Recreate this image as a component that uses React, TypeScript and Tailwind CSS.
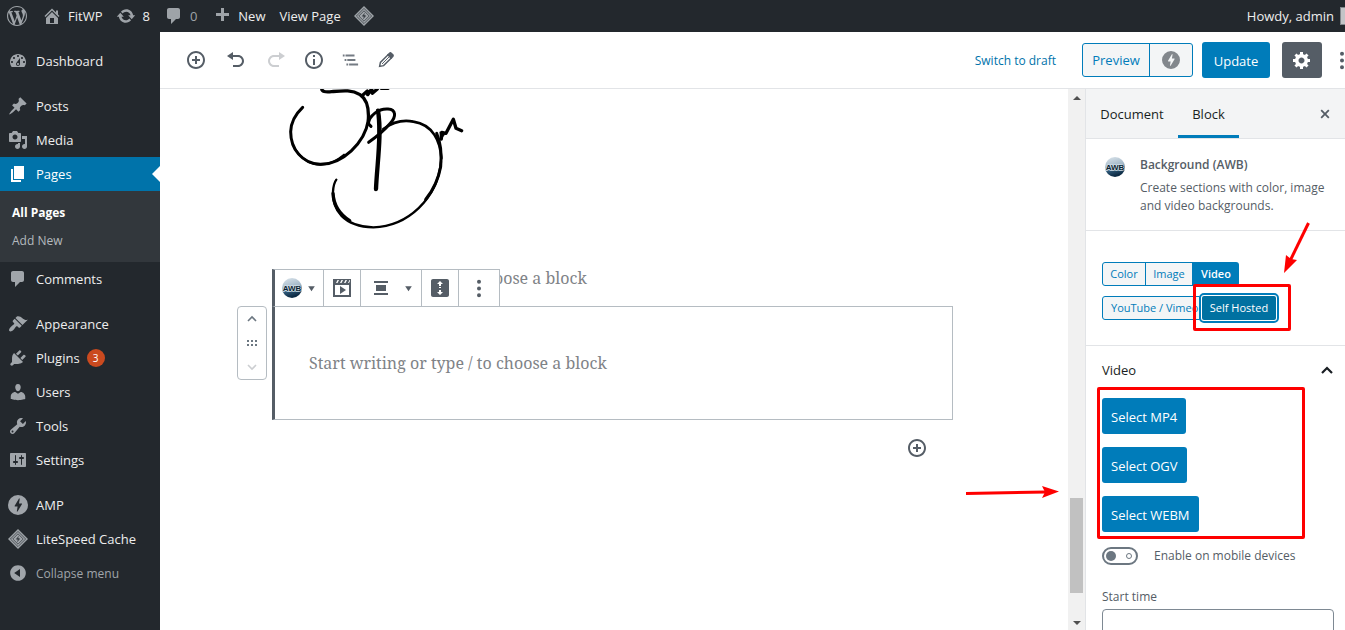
import type { ReactNode } from 'react';

const icons = {
  home: 'M16 8.5l1.53 1.53-1.06 1.06L10 4.6l-6.47 6.49-1.06-1.06L10 2.5l4 4v-2h2v4zm-6-2.46l6 5.99V18H4v-5.97zM12 17v-5H8v5h4z',
  update: 'M10.2 3.28c3.53 0 6.43 2.61 6.92 6h2.08l-3.5 4-3.5-4h2.32c-.45-1.97-2.21-3.45-4.32-3.45-1.45 0-2.73.71-3.54 1.78L4.95 5.66C6.23 4.2 8.11 3.28 10.2 3.28zm-.4 13.44c-3.52 0-6.43-2.61-6.92-6H.8l3.5-4c1.17 1.33 2.33 2.67 3.5 4H5.48c.45 1.97 2.21 3.45 4.32 3.45 1.45 0 2.73-.71 3.54-1.78l1.71 1.95c-1.28 1.46-3.15 2.38-5.25 2.38z',
  comments: 'M5 2h9c1.1 0 2 .9 2 2v7c0 1.1-.9 2-2 2h-2l-5 5v-5H5c-1.1 0-2-.9-2-2V4c0-1.1.9-2 2-2z',
  plus: 'M17 7v3h-5v5H9v-5H4V7h5V2h3v5h5z',
  dashboard: 'M3.76 16h12.48c1.1-1.37 1.76-3.11 1.76-5 0-4.42-3.58-8-8-8s-8 3.58-8 8c0 1.89.66 3.63 1.76 5zM10 4c.55 0 1 .45 1 1s-.45 1-1 1-1-.45-1-1 .45-1 1-1zM6 6c.55 0 1 .45 1 1s-.45 1-1 1-1-.45-1-1 .45-1 1-1zm8 0c.55 0 1 .45 1 1s-.45 1-1 1-1-.45-1-1 .45-1 1-1zm-5.37 5.55L12 7v6c0 1.1-.9 2-2 2s-2-.9-2-2c0-.57.24-1.08.63-1.45zM4 10c.55 0 1 .45 1 1s-.45 1-1 1-1-.45-1-1 .45-1 1-1zm12 0c.55 0 1 .45 1 1s-.45 1-1 1-1-.45-1-1 .45-1 1-1zm-5 3c0-.55-.45-1-1-1s-1 .45-1 1 .45 1 1 1 1-.45 1-1z',
  posts: 'M10.44 3.02l1.82-1.82 6.36 6.35-1.83 1.82c-1.05-.68-2.48-.57-3.41.36l-.75.75c-.92.93-1.04 2.35-.35 3.41l-1.83 1.82-2.41-2.41-2.8 2.79c-.42.42-3.38 2.71-3.8 2.29s1.86-3.39 2.28-3.81l2.79-2.79L4.1 9.36l1.83-1.82c1.05.69 2.48.57 3.4-.36l.75-.75c.93-.92 1.05-2.35.36-3.41z',
  media: 'M13 11V4c0-.55-.45-1-1-1h-1.67L9 1H5L3.67 3H2c-.55 0-1 .45-1 1v7c0 .55.45 1 1 1h10c.55 0 1-.45 1-1zM7 4.5c1.38 0 2.5 1.12 2.5 2.5S8.38 9.5 7 9.5 4.5 8.38 4.5 7 5.62 4.5 7 4.5zM14 6h5v10.5c0 1.38-1.12 2.5-2.5 2.5S14 17.88 14 16.5s1.12-2.5 2.5-2.5c.17 0 .34.02.5.05V9h-3V6zm-4 8.05V13h2v3.5c0 1.38-1.12 2.5-2.5 2.5S7 17.88 7 16.5 8.12 14 9.5 14c.17 0 .34.02.5.05z',
  pages: 'M6 15V2h10v13H6zm-1 1h8v2H3V5h2v11z',
  appearance: 'M14.48 11.06L7.41 3.99l1.5-1.5c.5-.56 2.3-.47 3.51.32 1.21.8 1.43 1.28 2.91 2.1 1.18.64 2.45 1.26 4.45.85zm-.71.71L6.7 4.7 4.93 6.47c-.39.39-.39 1.02 0 1.41l1.06 1.06c.39.39.39 1.03 0 1.42-.6.6-1.43 1.11-2.21 1.69-.35.26-.7.53-1.01.84C1.43 14.23.4 16.08 1.4 17.07c.99 1 2.84-.03 4.18-1.36.31-.31.58-.66.85-1.02.57-.78 1.08-1.61 1.69-2.21.39-.39 1.02-.39 1.41 0l1.06 1.06c.39.39 1.02.39 1.41 0z',
  plugins: 'M13.11 4.36L9.87 7.6 8 5.73l3.24-3.24c.35-.34 1.05-.2 1.56.32.52.51.66 1.21.31 1.55zm-8 1.77l.91-1.12 9.01 9.01-1.19.84c-.71.71-2.63 1.16-3.82 1.16H6.14L4.9 17.26c-.59.59-1.54.59-2.12 0-.59-.58-.59-1.53 0-2.12l1.24-1.24v-3.88c0-1.13.4-3.19 1.09-3.89zm7.26 3.97l3.24-3.24c.34-.35 1.04-.21 1.55.31.52.51.66 1.21.31 1.55l-3.24 3.25z',
  users: 'M10 9.25c-2.27 0-2.73-3.44-2.73-3.44C7 4.02 7.82 2 9.97 2c2.16 0 2.98 2.02 2.71 3.81 0 0-.41 3.44-2.68 3.44zm0 2.57L12.72 10c2.39 0 4.52 2.33 4.52 4.53v2.49s-3.65 1.13-7.24 1.13c-3.65 0-7.24-1.13-7.24-1.13v-2.49c0-2.25 1.94-4.48 4.47-4.48z',
  tools: 'M16.68 9.77c-1.34 1.34-3.3 1.67-4.95.99l-5.41 6.52c-.99.99-2.59.99-3.58 0s-.99-2.59 0-3.57l6.52-5.42c-.68-1.65-.35-3.61.99-4.95 1.28-1.28 3.12-1.62 4.72-1.06l-2.89 2.89 2.82 2.82 2.86-2.87c.53 1.58.18 3.39-1.08 4.65zM3.81 16.21c.4.39 1.04.39 1.43 0 .4-.4.4-1.04 0-1.43-.39-.4-1.03-.4-1.43 0-.39.39-.39 1.03 0 1.43z',
  settings: 'M18 16V4c0-.55-.45-1-1-1H3c-.55 0-1 .45-1 1v12c0 .55.45 1 1 1h14c.55 0 1-.45 1-1zM8 11h1c.55 0 1 .45 1 1s-.45 1-1 1H8v1.5c0 .28-.22.5-.5.5s-.5-.22-.5-.5V13H6c-.55 0-1-.45-1-1s.45-1 1-1h1V5.5c0-.28.22-.5.5-.5s.5.22.5.5V11zm5-2h-1c-.55 0-1-.45-1-1s.45-1 1-1h1V5.5c0-.28.22-.5.5-.5s.5.22.5.5V7h1c.55 0 1 .45 1 1s-.45 1-1 1h-1v5.5c0 .28-.22.5-.5.5s-.5-.22-.5-.5V9z',
  collapse: 'M10 2.16c4.33 0 7.84 3.51 7.84 7.84s-3.51 7.84-7.84 7.84S2.16 14.33 2.16 10 5.67 2.16 10 2.16zm2 11.72V6.12L6.18 9.97z',
  gear: 'M18 12h-2.18c-.17.7-.44 1.35-.81 1.93l1.54 1.54-2.1 2.1-1.54-1.54c-.58.36-1.23.63-1.91.79V19H8v-2.18c-.68-.16-1.33-.43-1.91-.79l-1.54 1.54-2.12-2.12 1.54-1.54c-.36-.58-.63-1.23-.79-1.91H1V9.03h2.17c.16-.7.44-1.35.8-1.94L2.43 5.55l2.1-2.1 1.54 1.54c.58-.37 1.24-.64 1.93-.81V2h3v2.18c.68.16 1.33.43 1.91.79l1.54-1.54 2.12 2.12-1.54 1.54c.36.59.64 1.24.8 1.94H18V12zm-8.5 1.5c1.66 0 3-1.34 3-3s-1.34-3-3-3-3 1.34-3 3 1.34 3 3 3z',
  insert: 'M10 1c-5 0-9 4-9 9s4 9 9 9 9-4 9-9-4-9-9-9zm0 16c-3.9 0-7-3.1-7-7s3.1-7 7-7 7 3.1 7 7-3.1 7-7 7zm1-11H9v3H6v2h3v3h2v-3h3V9h-3V6z',
  undo: 'M12 5H7V2L1 6l6 4V7h5c2.2 0 4 1.8 4 4s-1.8 4-4 4H7v2h5c3.3 0 6-2.7 6-6s-2.7-6-6-6z',
  redo: 'M8 5h5V2l6 4-6 4V7H8c-2.2 0-4 1.8-4 4s1.8 4 4 4h5v2H8c-3.3 0-6-2.7-6-6s2.7-6 6-6z',
  info: 'M9 15h2V9H9v6zm1-14c-5 0-9 4-9 9s4 9 9 9 9-4 9-9-4-9-9-9zm0 16c-3.9 0-7-3.1-7-7s3.1-7 7-7 7 3.1 7 7-3.1 7-7 7zM9 7h2V5H9v2z',
  outline: 'M2 4h2v2H2zM5 4h10v2H5zM4 9h2v2H4zM7 9h9v2H7zM6 14h2v2H6zM9 14h10v2H9z',
  center: 'M3 5h14V3H3v2zm12 8V7H5v6h10zM3 17h14v-2H3v2z',
  close: 'M14.95 6.46L11.41 10l3.54 3.54-1.41 1.41L10 11.42l-3.53 3.53-1.42-1.42L8.58 10 5.05 6.47l1.42-1.42L10 8.58l3.54-3.53z',
  dots: 'M12 3.8a2 2 0 1 1-4 0 2 2 0 0 1 4 0zM12 10.5a2 2 0 1 1-4 0 2 2 0 0 1 4 0zM12 17.2a2 2 0 1 1-4 0 2 2 0 0 1 4 0z',
  caret: 'M4 6h12l-6 9z',
  amp: 'M10 0a10 10 0 1 0 0 20 10 10 0 0 0 0-20zm3.9 9.2l-4.3 7.2H8.8l.8-4.8H7.2c-.5 0-.7-.4-.5-.9L11 3.6h.8L11 8.4h2.4c.5 0 .8.3.5.8z',
  clip: 'M1 1h18v18H1zM3 7v10h14V7zM4 5h1.500l1.500-3H5.500zM8 5h1.500L11 2H9.500zM12 5h1.500L15 2h-1.500zM16 5h1l1-2v-1h-.5zM8 8v8l6-4z',
  height: 'M3 1h14c1.1 0 2 .9 2 2v14c0 1.1-.9 2-2 2H3c-1.1 0-2-.9-2-2V3c0-1.1.9-2 2-2zm7 2L7 6h2v2h2V6h2zM9 12v2H7l3 3 3-3h-2v-2zM9 9h2v1H9z',
};

type IconName = keyof typeof icons;

function Icon({ name, className = 'size-5' }: { name: IconName; className?: string }) {
  return (
    <svg viewBox="0 0 20 20" fill="currentColor" fillRule="evenodd" className={`shrink-0 ${className}`} aria-hidden="true">
      <path d={icons[name]} />
    </svg>
  );
}

function LiteSpeed() {
  return (
    <svg viewBox="0 0 20 20" className="size-5 shrink-0" aria-hidden="true">
      <path d="M10 0l10 10-10 10L0 10z" fill="#9ea3a8" />
      <path d="M10 2.400l7.600 7.600-7.600 7.600L2.400 10zM10 4.800l5.200 5.200-5.200 5.200L4.800 10z" fill="none" stroke="#3c4248" strokeWidth=".8" />
      <path d="M11 6.400L7.800 10.200l2 .6-.9 2.800 3.300-3.800-2-.7z" fill="#3c4248" />
    </svg>
  );
}

function WordPress() {
  return (
    <svg viewBox="0 0 20 20" className="size-5" fill="#9ea3a8" aria-hidden="true">
      <path d="M20 10c0-5.51-4.49-10-10-10C4.48 0 0 4.49 0 10c0 5.52 4.48 10 10 10 5.51 0 10-4.48 10-10zM7.78 15.37L4.37 6.22c.55-.02 1.17-.08 1.17-.08.5-.06.44-1.13-.06-1.11 0 0-1.45.11-2.37.11-.18 0-.37 0-.58-.01C4.12 2.69 6.87 1.11 10 1.11c2.33 0 4.45.87 6.05 2.34-.68-.11-1.65.39-1.65 1.58 0 .74.45 1.36.9 2.1.35.61.55 1.36.55 2.46 0 1.49-1.4 5-1.4 5l-3.03-8.37c.54-.02.82-.17.82-.17.5-.05.44-1.25-.06-1.22 0 0-1.44.12-2.38.12-.87 0-2.33-.12-2.33-.12-.5-.03-.56 1.2-.06 1.22l.92.08 1.26 3.41zM17.41 10c.24-.64.74-1.87.43-4.25.7 1.29 1.05 2.71 1.05 4.25 0 3.29-1.73 6.24-4.4 7.78.97-2.59 1.94-5.2 2.92-7.78zM6.1 18.09C3.12 16.65 1.11 13.53 1.11 10c0-1.3.23-2.48.72-3.59C3.25 10.3 4.67 14.2 6.1 18.09zm4.03-6.63l2.58 6.98c-.86.29-1.76.45-2.71.45-.79 0-1.57-.11-2.29-.33.81-2.38 1.62-4.74 2.42-7.1z" />
    </svg>
  );
}

function AwbLogo() {
  return (
    <svg viewBox="0 0 20 20" className="size-5 shrink-0" aria-label="AWB">
      <defs>
        <linearGradient id="awb" x1="0" y1="0" x2="0.3" y2="1">
          <stop offset="0" stopColor="#dde6ed" />
          <stop offset=".55" stopColor="#a3b8c8" />
          <stop offset=".7" stopColor="#2f5877" />
          <stop offset="1" stopColor="#0d2b44" />
        </linearGradient>
      </defs>
      <circle cx="10" cy="10" r="10" fill="url(#awb)" />
      <text x="10" y="13" textAnchor="middle" fontSize="8" fontWeight="700" fill="#0b1f33" stroke="#cddbe5" strokeWidth="1.6" paintOrder="stroke" fontFamily="Liberation Sans">AWB</text>
    </svg>
  );
}

const menu: { label: string; icon?: IconName; sep?: boolean; badge?: string }[] = [
  { label: 'Dashboard', icon: 'dashboard' },
  { label: 'Posts', icon: 'posts', sep: true },
  { label: 'Media', icon: 'media' },
  { label: 'Pages', icon: 'pages' },
  { label: 'Comments', icon: 'comments' },
  { label: 'Appearance', icon: 'appearance', sep: true },
  { label: 'Plugins', icon: 'plugins', badge: '3' },
  { label: 'Users', icon: 'users' },
  { label: 'Tools', icon: 'tools' },
  { label: 'Settings', icon: 'settings' },
  { label: 'AMP', icon: 'amp', sep: true },
  { label: 'LiteSpeed Cache' },
];

function AdminBar() {
  return (
    <header className="flex h-8 shrink-0 items-center overflow-hidden bg-[#23282d] pl-[7px] text-[13px] text-[#eee]">
      <a href="#" aria-label="WordPress"><WordPress /></a>
      <a href="#" className="ml-[15px] flex items-center gap-[6px]">
        <Icon name="home" className="size-5 text-[#9ea3a8]" /><span className="pt-[2px]">FitWP</span>
      </a>
      <a href="#" className="ml-[14px] flex items-center gap-[6px]">
        <Icon name="update" className="size-5 text-[#9ea3a8]" /><span className="pt-[2px]">8</span>
      </a>
      <a href="#" className="ml-[14px] flex items-center gap-[6px] text-[#9ea3a8]">
        <Icon name="comments" /><span className="pt-[2px]">0</span>
      </a>
      <a href="#" className="ml-[15px] flex items-center gap-[6px]">
        <Icon name="plus" className="size-5 text-[#9ea3a8]" /><span className="pt-[2px]">New</span>
      </a>
      <a href="#" className="ml-[14px] pt-[2px]">View Page</a>
      <a href="#" className="ml-[13px]" aria-label="LiteSpeed"><LiteSpeed /></a>
      <a href="#" className="ml-auto flex items-center gap-[6px]">
        <span className="pt-[2px]">Howdy, admin</span>
        <span className="h-[18px] w-[5px] border border-r-0 border-[#82878c] bg-[#c3c4c7]" />
      </a>
    </header>
  );
}

function AdminMenu() {
  return (
    <nav className="w-40 shrink-0 bg-[#23282d] pt-3 text-[13px] text-[#eee]">
      <ul>
        {menu.map(item => (
          <li key={item.label} className={item.sep ? 'mt-[11px]' : ''}>
            <a
              href="#"
              className={`relative flex h-[34px] items-center gap-2 pl-2 ${item.label === 'Pages' ? 'bg-[#0073aa] text-white' : ''}`}
            >
              <span className={item.label === 'Pages' ? 'text-white' : 'text-[#a0a5aa]'}>
                {item.icon ? <Icon name={item.icon} /> : <LiteSpeed />}
              </span>
              <span className="pt-[2px]">{item.label}</span>
              {item.badge && (
                <span className="-ml-px flex size-[18px] items-center justify-center rounded-full bg-[#ca4a1f] text-[10px] text-white">{item.badge}</span>
              )}
              {item.label === 'Pages' && (
                <span className="absolute top-[9px] right-0 border-y-8 border-r-8 border-y-transparent border-r-white" />
              )}
            </a>
            {item.label === 'Pages' && (
              <ul className="bg-[#32373c] pt-2 pb-[7px] pl-3 text-[12px] leading-[28px]">
                <li><a href="#" className="font-bold text-white">All Pages</a></li>
                <li><a href="#" className="text-[#b4b9be]">Add New</a></li>
              </ul>
            )}
          </li>
        ))}
      </ul>
      <button className="flex h-[34px] items-center gap-2 pl-2 text-[12px] text-[#a0a5aa]">
        <Icon name="collapse" /><span className="pt-[2px]">Collapse menu</span>
      </button>
    </nav>
  );
}

function EditorHeader() {
  return (
    <div className="flex h-[57px] shrink-0 items-center overflow-hidden border-b border-[#e2e4e7] pl-6 text-[#555d66]">
      <div className="flex flex-1 items-center gap-4">
        <button aria-label="Add block" className="flex w-6 justify-center"><Icon name="insert" /></button>
        <button aria-label="Undo" className="flex w-6 justify-center"><Icon name="undo" /></button>
        <button aria-label="Redo" className="flex w-6 justify-center text-[#ccced1]"><Icon name="redo" /></button>
        <button aria-label="Content structure" className="flex w-5 justify-center"><Icon name="info" /></button>
        <button aria-label="Block navigation" className="flex w-5 justify-center text-[#747b83]"><Icon name="outline" className="size-[18px]" /></button>
        <button aria-label="Edit mode" className="flex w-5 justify-center">
          <svg viewBox="0 0 20 20" className="size-4" fill="none" stroke="currentColor" strokeWidth="1.8" aria-hidden="true">
            <path d="M2 18l1-5L12.600 3.400l4 4L7 17z" />
            <path d="M12.500 3.500l2-2c.6-.6 1.400-.6 2 0l2 2c.6.6.6 1.400 0 2l-2 2z" fill="currentColor" />
            <path d="M5 15l9-9" strokeWidth="1.200" />
          </svg>
        </button>
      </div>
      <a href="#" className="mr-[26px] pt-[2px] text-[12px] text-[#0073aa]">Switch to draft</a>
      <div className="mr-[9px] flex h-[34px] w-[111px] rounded-[3px] border border-[#007cba] bg-[#f3f5f6]">
        <button className="flex-1 border-r border-[#007cba] pt-[2px] text-[13px] text-[#007cba]">Preview</button>
        <button className="flex w-[42px] items-center justify-center text-[#82878c]" aria-label="Preview AMP"><Icon name="amp" className="size-[18px]" /></button>
      </div>
      <button className="mr-3 h-9 w-[68px] rounded-[3px] bg-[#007cba] pt-[3px] text-[13px] font-medium text-white">Update</button>
      <button className="mr-[10px] flex h-9 w-10 items-center justify-center rounded-[3px] bg-[#555d66] text-white" aria-label="Settings"><Icon name="gear" /></button>
      <button className="flex w-[13px] overflow-hidden" aria-label="More"><Icon name="dots" /></button>
    </div>
  );
}

function Signature() {
  return (
    <svg viewBox="57 12 600 426" className="h-[142px] w-[200px]" fill="none" stroke="#000" strokeLinecap="round" strokeLinejoin="round" aria-label="Signature">
      <path strokeWidth="10" d="M155 10c0 10 10 12 30 10c35-3 60-6 85 9c24 16 27 46 25 76" />
      <path strokeWidth="9" d="M295 105c-10 68-78 134-145 133c-54-3-88-46-88-98c1-34 18-56 36-73" />
      <path strokeWidth="6" d="M74 190q32 49 78 49q38-2 70-30" />
      <path strokeWidth="10" d="M276 32l16-14l1 11l12-17l2 13l15-13M334 10h20" />
      <path strokeWidth="9" d="M303 124l-8-8c3-24 30-46 59-44c25 2 25 23 7 43c-17 20-42 41-65 57" />
      <path strokeWidth="13" d="M324 77c12 70-3 160-6 235" />
      <path strokeWidth="8" d="M340 132c30-22 60-28 90-22c60 9 81 60 84 110" />
      <path strokeWidth="9" d="M500 145q18 42 12 100q-10 55-45 98" />
      <path strokeWidth="7" d="M513 230c-11 112-100 194-203 197c-90-2-124-54-121-107c1-16 4-28 10-36" />
      <path strokeWidth="10" d="M189 325q3 52 50 82" />
      <path strokeWidth="10" d="M514 162l1-20l13 3l22-42l8 27l17 7" />
      <path fill="#000" d="M509 141l18 4l-14 20z" />
    </svg>
  );
}

function ToolCell({ children, className, label }: { children: ReactNode; className: string; label: string }) {
  return (
    <button aria-label={label} className={`flex items-center justify-center border-r border-[#b5bcc2] ${className}`}>{children}</button>
  );
}

function Canvas() {
  return (
    <main className="min-w-0 flex-1 overflow-hidden font-['Noto_Serif','DejaVu_Serif_Condensed','DejaVu_Serif',serif] text-[16px] text-[#7f8387]">
      <div className="mx-auto w-[650px] max-w-full">
        <Signature />
        <p className="mt-[33px] leading-[28px]">Start writing or type / to choose a block</p>
        <div className="relative -mr-[14px] -ml-[17px] mt-[14px] h-[114px] border border-l-[3px] border-[#b5bcc2] border-l-[#555d66] pt-[42px] pl-[34px]">
          <p className="leading-[28px]">Start writing or type / to choose a block</p>
          <div className="absolute bottom-full -left-[3px] flex h-[38px] border-y border-l-[3px] border-[#b5bcc2] border-l-[#555d66] bg-white text-[#555d66]">
            <ToolCell label="Change block type" className="w-[49px] gap-1"><AwbLogo /><Icon name="caret" className="size-[11px]" /></ToolCell>
            <ToolCell label="Background" className="w-[37px]"><Icon name="clip" /></ToolCell>
            <ToolCell label="Alignment" className="w-[61px] gap-3 pl-[2px]"><Icon name="center" /><Icon name="caret" className="size-[11px]" /></ToolCell>
            <ToolCell label="Full height" className="w-[37px]"><Icon name="height" /></ToolCell>
            <ToolCell label="More options" className="w-[41px]"><Icon name="dots" /></ToolCell>
          </div>
          <div className="absolute -top-px -left-[38px] flex h-[74px] w-[30px] flex-col items-center justify-between rounded-[4px] border border-[#b5bcc2] py-2 text-[#6c7781]">
            <svg viewBox="0 0 10 8" className="h-2 w-[10px]" fill="none" stroke="currentColor" strokeWidth="1.600"><path d="M1 6l4-4 4 4" /></svg>
            <svg viewBox="0 0 10 6" className="h-[6px] w-[10px]" fill="currentColor"><path d="M0 0h2v2H0zM4 0h2v2H4zM8 0h2v2H8zM0 4h2v2H0zM4 4h2v2H4zM8 4h2v2H8z" /></svg>
            <svg viewBox="0 0 10 8" className="h-2 w-[10px]" fill="none" stroke="#ccced1" strokeWidth="1.600"><path d="M1 2l4 4 4-4" /></svg>
          </div>
        </div>
        <div className="flex justify-end pt-[18px] pr-3">
          <button aria-label="Add block" className="text-[#555d66]"><Icon name="insert" /></button>
        </div>
      </div>
    </main>
  );
}

function Scrollbar() {
  return (
    <div className="flex w-[17px] shrink-0 flex-col items-center justify-between bg-[#f1f1f1] pt-[7px] pb-[5px]" aria-hidden="true">
      <span className="border-x-4 border-b-4 border-x-transparent border-b-[#505050]" />
      <span className="mt-auto mb-[28px] h-[95px] w-[13px] bg-[#c1c1c1]" />
      <span className="border-x-4 border-t-4 border-x-transparent border-t-[#505050]" />
    </div>
  );
}

const outlined = 'border border-[#007cba] bg-[#f3f5f6] text-[#007cba]';
const primary = 'h-9 rounded-[3px] bg-[#007cba] px-[9px] pt-[3px]';

function Inspector() {
  return (
    <aside className="w-[260px] shrink-0 overflow-hidden border-l border-[#e2e4e7] text-[12px] text-[#555d66]">
      <div className="flex h-[50px] items-stretch border-b border-[#e2e4e7] bg-[#f3f4f5] text-[13px] text-[#191e23]">
        <button className="w-[92px] pt-[2px]">Document</button>
        <button className="w-[61px] border-b-[3px] border-[#007cba] pt-[5px] font-medium">Block</button>
        <button className="mr-[11px] ml-auto text-[#555d66]" aria-label="Close"><Icon name="close" className="size-[18px]" /></button>
      </div>
      <div className="flex h-[92px] gap-[15px] border-b border-[#e2e4e7] pt-[17px] pl-[19px]">
        <div className="pt-px"><AwbLogo /></div>
        <div className="leading-[18px]">
          <h2 className="mb-[5px] font-semibold">Background (AWB)</h2>
          <p>Create sections with color, image and video backgrounds.</p>
        </div>
      </div>
      <div className="h-[115px] border-b border-[#e2e4e7] pt-[31px] pl-4 text-[11px]">
        <div className="flex h-6">
          <button className={`w-11 rounded-l-[3px] ${outlined}`}>Color</button>
          <button className={`-ml-px w-12 ${outlined}`}>Image</button>
          <button className="w-[46px] rounded-r-[3px] bg-[#007cba] font-semibold text-white">Video</button>
        </div>
        <div className="mt-[10px] flex h-6">
          <button className={`w-[98px] overflow-hidden rounded-l-[3px] pl-2 text-left whitespace-nowrap ${outlined}`}>YouTube / Vimeo</button>
          <button className="relative ml-[2px] w-[74px] rounded-[2px] bg-[#0071a1] font-medium text-white ring-1 ring-white outline-2 outline-offset-1 outline-[#007cba]">
            Self Hosted
            <span className="pointer-events-none absolute -top-3 -right-[15px] -bottom-[11px] -left-[9px] rounded-[2px] border-[3px] border-[#fe0000]" />
          </button>
        </div>
      </div>
      <div className="pr-[11px] pl-4">
        <button className="flex h-12 w-full items-center justify-between text-[13px] text-[#191e23]">
          <span className="pt-[2px]">Video</span>
          <svg viewBox="0 0 14 10" className="h-[10px] w-[14px]" fill="none" stroke="currentColor" strokeWidth="2.200" aria-hidden="true"><path d="M2 8l5-5 5 5" /></svg>
        </button>
        <div className="relative mt-1 flex flex-col items-start gap-[13px] text-[13px] font-medium text-white">
          <button className={primary}>Select MP4</button>
          <button className={primary}>Select OGV</button>
          <button className={primary}>Select WEBM</button>
          <span className="pointer-events-none absolute -top-[11px] right-[29px] -bottom-[7px] -left-[5px] rounded-[2px] border-[3px] border-[#fe0000]" />
        </div>
        <label className="mt-[13px] flex items-center gap-4 leading-[20px]">
          <span className="relative flex h-[18px] w-9">
            <input type="checkbox" className="h-[18px] w-9 appearance-none rounded-full border-2 border-[#6c7781] bg-white" />
            <span className="absolute top-1 left-1 size-[10px] rounded-full bg-[#6c7781]" />
            <span className="absolute top-[6px] right-[6px] size-[6px] rounded-full border border-[#6c7781]" />
          </span>
          <span className="pt-px">Enable on mobile devices</span>
        </label>
        <label htmlFor="start-time" className="mt-[21px] mb-[2px] block leading-[20px]">Start time</label>
        <input id="start-time" type="text" className="h-[30px] w-full rounded-[4px] border border-[#7e8993] px-2" />
      </div>
    </aside>
  );
}

function Arrows() {
  return (
    <>
      <svg viewBox="0 0 94 14" className="pointer-events-none absolute top-[485px] right-[285px] h-[14px] w-[94px]" aria-hidden="true">
        <path d="M0 8.500L80 7" stroke="#fe0000" strokeWidth="3" />
        <path d="M93 6.500L76 1l3 6-3 6z" fill="#fe0000" />
      </svg>
      <svg viewBox="0 0 28 52" className="pointer-events-none absolute top-[222px] right-[34px] h-[52px] w-7" aria-hidden="true">
        <path d="M25.500 1L6 41" stroke="#fe0000" strokeWidth="3" />
        <path d="M1 51L3 33l5 4 6 1z" fill="#fe0000" />
      </svg>
    </>
  );
}

export default function App() {
  return (
    <div className="relative flex h-screen flex-col overflow-hidden bg-white font-['Open_Sans',sans-serif]">
      <AdminBar />
      <div className="flex min-h-0 flex-1">
        <AdminMenu />
        <div className="flex min-w-0 flex-1 flex-col">
          <EditorHeader />
          <div className="flex min-h-0 flex-1">
            <Canvas />
            <Scrollbar />
            <Inspector />
          </div>
        </div>
      </div>
      <Arrows />
    </div>
  );
}
